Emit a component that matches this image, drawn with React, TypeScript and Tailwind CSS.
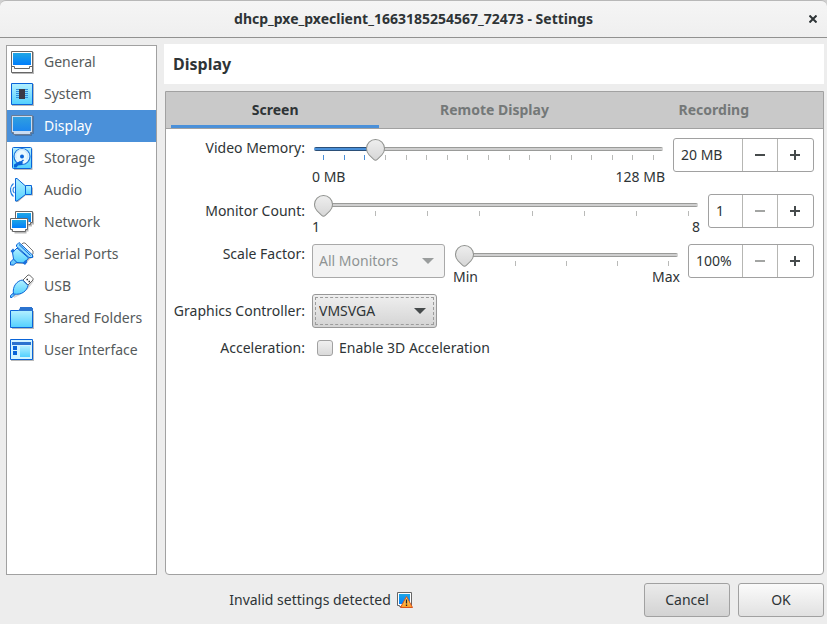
import { useState } from "react";
import type { CSSProperties, ReactNode } from "react";

const FONT = "font-['Noto_Sans',sans-serif]";

/* ---------- category icons, 24 x 24 ---------- */

function Gradients() {
  return (
    <svg width="0" height="0" className="absolute" aria-hidden="true">
      <defs>
        <linearGradient id="screen" x1="0" y1="0" x2="0" y2="1">
          <stop offset="0" stopColor="#1fa6e4" />
          <stop offset="1" stopColor="#007efc" />
        </linearGradient>
        <linearGradient id="screen-selected" x1="0" y1="0" x2="0" y2="1">
          <stop offset="0" stopColor="#2f9fe0" />
          <stop offset="1" stopColor="#1c86ee" />
        </linearGradient>
        <linearGradient id="pale" x1="0" y1="0" x2="0" y2="1">
          <stop offset="0" stopColor="#b4f0ff" />
          <stop offset="1" stopColor="#52d0ff" />
        </linearGradient>
        <linearGradient id="warn" x1="0" y1="0" x2="0" y2="1">
          <stop offset="0" stopColor="#ffe07a" />
          <stop offset="1" stopColor="#ff9a1f" />
        </linearGradient>
      </defs>
    </svg>
  );
}

function Icon({ children }: { children: ReactNode }) {
  return (
    <svg width="24" height="24" viewBox="0 0 24 24" className="shrink-0" aria-hidden="true">
      {children}
    </svg>
  );
}

const GeneralIcon = () => (
  <Icon>
    <path d="M2 2h22v22H2z" fill="#b9b9b9" />
    <path d="M1.5 1.5h21v21h-21z" fill="#fff" stroke="#666" />
    <path d="M3 3h18v12H3z" fill="url(#screen)" />
    <path d="M1.5 16.5h3v2h15v-2h3" fill="none" stroke="#666" />
  </Icon>
);

const SystemIcon = () => (
  <Icon>
    <path d="M2 2h22v22H2z" fill="#b9b9b9" />
    <path d="M1.5 1.5h21v21h-21z" fill="url(#pale)" stroke="#0a64d8" />
    <path d="M6 7.5h12M6 9.5h12M6 11.5h12M6 13.5h12M6 15.5h12" stroke="#2f8ee0" />
    <path d="M9 7h6v10H9z" fill="#3a3a46" />
  </Icon>
);

const DisplayIcon = () => (
  <Icon>
    <path d="M2 2h22v18h-2v2H5v-2H2z" fill="#4577ad" />
    <path d="M1.5 1.5h21v17h-2v2h-17v-2h-2z" fill="#c9dcf2" stroke="#6b7c94" />
    <path d="M3 3h18v14H3z" fill="url(#screen-selected)" />
  </Icon>
);

const StorageIcon = () => (
  <Icon>
    <path d="M4 2.5h18.5v21.5H4z" fill="#b9b9b9" />
    <rect x="2.5" y="1.5" width="19" height="21" rx="1" fill="url(#pale)" stroke="#0a64d8" />
    <circle cx="12" cy="10.5" r="8" fill="#e9f9ff" stroke="#1d74dc" strokeWidth="1.2" />
    <path d="M6.5 12.5a6 6 0 1 1 10 1" fill="none" stroke="#cfeafb" strokeWidth="1.5" />
    <circle cx="12" cy="10.5" r="2" fill="#0a64d8" />
    <path d="M4 21.5v-3l6-3.5 3 1.5-1 2.5-4 .5-1.5 2z" fill="#0a64d8" />
    <path d="M11 16l2.5-2" stroke="#0a64d8" strokeWidth="1.5" />
  </Icon>
);

const AudioIcon = () => (
  <Icon>
    <path d="M7 2l8 7.5h8v8h-7.5l-7.5 6.5H6z" fill="#b9b9b9" />
    <path d="M5.5 .5h1.5l8.5 7.5v8.5l-8.5 6.500H5.500z" fill="url(#pale)" stroke="#0a64d8" />
    <path d="M15.5 7.5h6v9h-6z" fill="url(#pale)" stroke="#0a64d8" />
    <path d="M4.5 9c-2 1-2 5 0 6M3.5 5.5c-4 3-4 10 0 13" fill="none" stroke="#2580e0" strokeWidth="1.2" />
  </Icon>
);

const NetworkIcon = () => (
  <Icon>
    <path d="M7 2.5h17v12h-2v2H9z" fill="#b9b9b9" />
    <path d="M5.5 1.5h17v11h-2v2h-13v-2h-2z" fill="#fff" stroke="#666" />
    <path d="M7 3h14v9H7z" fill="url(#screen)" />
    <path d="M1.5 9.5h17v12h-2v2h-12v-2h-3z" fill="#b9b9b9" />
    <path d="M.5 8.5h17v11h-2v2h-13v-2h-2z" fill="#fff" stroke="#666" />
    <path d="M2 10h14v8H2z" fill="url(#screen)" />
  </Icon>
);

const SerialIcon = () => (
  <Icon>
    <path d="M12 3l10 8 2 4-4 2-5 5H5l-3 2z" fill="#b9b9b9" />
    <path d="M11.5 2.5l1.5-1.5h2l8 8v3l-2 1.5z" fill="#fff" stroke="#777" />
    <path d="M3.5 17l-3 3v3h3l3.5-3z" fill="#6cc8fa" stroke="#0a64d8" />
    <path d="M7 6l-4.5 4.5 1 6.5 3.5 3.5 7.5.5 4-5z" fill="url(#pale)" stroke="#0a64d8" strokeLinejoin="round" />
    <path d="M6.5 3l2.5-2.5L22.5 13v2.5h-3.5L6.5 4.5z" fill="#8fdcff" stroke="#0a64d8" strokeLinejoin="round" />
    <path d="M9 2.5l11.5 11" stroke="#0a64d8" />
    <path d="M.5 9l2.5-2.5 2 2-2.5 3zM12.5 21l3-3 2 2-2.5 3z" fill="#1a6fdc" />
  </Icon>
);

const UsbIcon = () => (
  <Icon>
    <path d="M5 12l6-5 7-5 6 5-6 8-8 6-6 3z" fill="#c4c4c4" opacity=".7" />
    <path d="M13 6l5-5h1.5l3.5 3.5V6l-5 5z" fill="#fff" stroke="#666" />
    <path d="M16.5 5.5h1.5M18.5 7.5h1.5" stroke="#333" strokeWidth="1.5" />
    <path d="M3.5 20c-1.5-8 4-13.5 9-14l5.5 5.5c-1 5-6 10-14.5 8.5z" fill="url(#pale)" stroke="#0a64d8" />
    <path d="M.5 21.5l2.5-2 1.5 1.5-2.5 2.5H.5z" fill="#6cc8fa" stroke="#0a64d8" />
  </Icon>
);

const FolderIcon = () => (
  <Icon>
    <path d="M2 5h22v18H2z" fill="#b9b9b9" />
    <path d="M8 5l2-3v-1h12v1h1v4H8z" fill="#2b73cf" />
    <path d="M.5 4.5h22v17H.5z" fill="url(#pale)" stroke="#0a64d8" />
    <path d="M8 4h15v1H8z" fill="#2b73cf" />
  </Icon>
);

const InterfaceIcon = () => (
  <Icon>
    <path d="M1 3h23v20H1z" fill="#b9b9b9" />
    <path d="M.5 1.5h22v20H.5z" fill="#d3f4ff" stroke="#0a64d8" />
    <path d="M2 4h19v3H2z" fill="#2b73cf" />
    <path d="M3 8h4v4H3zM3 13h4v4H3z" fill="#0a64d8" />
    <path d="M10 8h10v11H10z" fill="url(#pale)" />
  </Icon>
);

const WarningIcon = () => (
  <svg width="16" height="16" viewBox="0 0 16 16" className="shrink-0" role="img" aria-label="Warning">
    <path d="M.5 .5h14v13h-2v1h-10v-1h-2z" fill="#fff" stroke="#666" />
    <path d="M2 2h11v10H2z" fill="url(#screen)" />
    <path d="M9.5 4.5l6 11H3.5z" fill="url(#warn)" stroke="#d9531e" strokeLinejoin="round" />
    <path d="M9.5 7.5v4M9.5 12.5v1.5" stroke="#222" strokeWidth="1.3" />
  </svg>
);

/* ---------- controls ---------- */

type SliderProps = {
  id: string;
  min: number;
  max: number;
  value: number;
  onChange: (value: number) => void;
  ticks: number;
  lowLabel: string;
  highLabel: string;
  filled?: boolean;
  roomy?: boolean;
  label?: string;
};

function Slider({ id, min, max, value, onChange, ticks, lowLabel, highLabel, filled, roomy, label }: SliderProps) {
  const part = (value - min) / (max - min);
  const fill = {
    "--fill": filled ? `${part * 100}%` : "0%",
  } as CSSProperties;
  return (
    <div className="flex min-w-0 flex-1 flex-col">
      <input
        id={id}
        type="range"
        aria-label={label}
        min={min}
        max={max}
        value={value}
        onChange={(e) => onChange(Number(e.target.value))}
        style={fill}
        className="relative z-10 mx-[2px] block h-[22px] appearance-none bg-transparent outline-none [&::-webkit-slider-runnable-track]:h-[4px] [&::-webkit-slider-runnable-track]:rounded-[2px] [&::-webkit-slider-runnable-track]:bg-[linear-gradient(to_right,#2b4f78_var(--fill),#9a9b99_var(--fill)),linear-gradient(to_right,#2b4f78_var(--fill),#9a9b99_var(--fill)),linear-gradient(to_right,#4a90d9_var(--fill),#cfcfcf_var(--fill))] [&::-webkit-slider-runnable-track]:bg-[length:100%_1px,100%_1px,100%_100%] [&::-webkit-slider-runnable-track]:bg-[position:top,bottom,center] [&::-webkit-slider-runnable-track]:bg-no-repeat [&::-webkit-slider-thumb]:-mt-2 [&::-webkit-slider-thumb]:size-[19px] [&::-webkit-slider-thumb]:rotate-45 [&::-webkit-slider-thumb]:appearance-none [&::-webkit-slider-thumb]:rounded-[50%_50%_3px_50%] [&::-webkit-slider-thumb]:border [&::-webkit-slider-thumb]:border-[#8f918e] [&::-webkit-slider-thumb]:bg-[linear-gradient(135deg,#f2f2f2,#d6d6d6)]"
      />
      <div className="-mt-[5px] flex h-[5px] justify-between px-[11px]" aria-hidden="true">
        {Array.from({ length: ticks }, (_, i) => (
          <span key={i} className={`w-px ${filled && i / (ticks - 1) <= part ? "bg-[#4a90d9]" : "bg-[#b9bab8]"}`} />
        ))}
      </div>
      <div className={`flex h-5 justify-between leading-[22px] ${roomy ? "mt-[6px]" : ""}`}>
        <span>{lowLabel}</span>
        <span>{highLabel}</span>
      </div>
    </div>
  );
}

type SpinProps = {
  label: string;
  value: number;
  suffix?: string;
  min: number;
  max: number;
  width: string;
  onChange: (value: number) => void;
};

function Spin({ label, value, suffix = "", min, max, width, onChange }: SpinProps) {
  const button =
    "flex items-center justify-center border-l border-[#b6b6b3] text-[#464b4c] disabled:text-[#a3a5a3]";
  return (
    <div className={`flex h-[34px] shrink-0 overflow-hidden rounded-[3px] border border-[#a1a1a1] bg-white ${width}`}>
      <input
        type="text"
        aria-label={label}
        value={`${value}${suffix}`}
        onChange={(e) => {
          const n = parseInt(e.target.value, 10);
          if (n >= min && n <= max) onChange(n);
        }}
        className="w-0 min-w-0 flex-1 pl-[7px] outline-none"
      />
      <button type="button" aria-label={`Decrease ${label}`} disabled={value <= min} onClick={() => onChange(value - 1)} className={`w-[35px] ${button}`}>
        <svg width="10" height="10" viewBox="0 0 10 10" stroke="currentColor" strokeWidth="2">
          <path d="M0 5h10" />
        </svg>
      </button>
      <button type="button" aria-label={`Increase ${label}`} disabled={value >= max} onClick={() => onChange(value + 1)} className={`w-9 pr-px ${button}`}>
        <svg width="10" height="10" viewBox="0 0 10 10" stroke="currentColor" strokeWidth="2">
          <path d="M0 5h10M5 0v10" />
        </svg>
      </button>
    </div>
  );
}

function Arrow({ className }: { className: string }) {
  return (
    <svg
      width="12"
      height="6"
      viewBox="0 0 12 6"
      className={`pointer-events-none absolute right-[11px] top-[14px] ${className}`}
      fill="currentColor"
      aria-hidden="true"
    >
      <path d="M0 0h12L6 6z" />
    </svg>
  );
}

/* ---------- window ---------- */

const CATEGORIES = [
  { name: "General", Glyph: GeneralIcon },
  { name: "System", Glyph: SystemIcon },
  { name: "Display", Glyph: DisplayIcon },
  { name: "Storage", Glyph: StorageIcon },
  { name: "Audio", Glyph: AudioIcon },
  { name: "Network", Glyph: NetworkIcon },
  { name: "Serial Ports", Glyph: SerialIcon },
  { name: "USB", Glyph: UsbIcon },
  { name: "Shared Folders", Glyph: FolderIcon },
  { name: "User Interface", Glyph: InterfaceIcon },
];

const TABS = ["Screen", "Remote Display", "Recording"];

export default function App() {
  const [memory, setMemory] = useState(20);
  const [monitors, setMonitors] = useState(1);
  const [scale, setScale] = useState(100);

  return (
    <div className={`flex h-screen flex-col bg-[#ededed] text-[14px] leading-5 text-[#2e3436] ${FONT}`}>
      <Gradients />
      <div className="bg-[#d0d0d0]">
        <header className="relative flex h-[38px] items-center justify-center rounded-t-[6px] border-b border-t border-b-[#919190] border-t-[#b8b8b8] bg-linear-to-b from-[#f5f5f5] to-[#efefef] font-bold">
          <h1>dhcp_pxe_pxeclient_1663185254567_72473 - Settings</h1>
          <button type="button" aria-label="Close" className="absolute right-[9px] top-[13px] p-px">
            <svg width="8" height="8" viewBox="0 0 8 8" stroke="#2e3436" strokeWidth="2">
              <path d="M.5 .5l7 7M7.5 .5l-7 7" />
            </svg>
          </button>
        </header>
      </div>

      <div className="flex min-h-0 flex-1 gap-[7px] pl-[6px] pr-[3px] pt-[6px]">
        <nav className="mt-px w-[151px] shrink-0 border border-[#a1a1a1] bg-white">
          <ul>
            {CATEGORIES.map(({ name, Glyph }) => (
              <li key={name}>
                <button
                  type="button"
                  className={`flex h-8 w-full items-center gap-[10px] pl-[3px] text-left ${
                    name === "Display" ? "bg-[#4a90d9] text-white" : "text-[#555a5b]"
                  }`}
                >
                  <Glyph />
                  {name}
                </button>
              </li>
            ))}
          </ul>
        </nav>

        <main className="flex min-w-0 flex-1 flex-col">
          <h2 className="flex h-[40px] items-center bg-white pl-[9px] text-[16px] font-bold">Display</h2>
          <section className="ml-px mt-[7px] flex-1 rounded-b-[4px] border border-[#a1a1a1] bg-white">
            <div role="tablist" className="flex h-[37px] gap-[11px] border-b border-[#a1a1a1] bg-[#c9c9c9] px-[5px]">
              {TABS.map((tab, i) => (
                <button
                  key={tab}
                  type="button"
                  role="tab"
                  aria-selected={i === 0}
                  className={`flex-1 border-b-[3px] pt-[2px] font-bold ${
                    i === 0 ? "border-[#4a90d9]" : "border-transparent text-[#747878]"
                  }`}
                >
                  {tab}
                </button>
              ))}
            </div>

            <form className="grid grid-cols-[134px_1fr] gap-x-[7px] gap-y-2 whitespace-nowrap pb-2 pl-[5px] pr-[9px] pt-[9px]">
              <label htmlFor="memory" className="text-right">Video Memory:</label>
              <div className="flex items-start gap-2">
                <Slider id="memory" min={0} max={128} value={memory} onChange={setMemory} ticks={17} lowLabel="0 MB" highLabel="128 MB" filled roomy />
                <Spin label="Video Memory" value={memory} suffix=" MB" min={0} max={128} width="w-[141px]" onChange={setMemory} />
              </div>

              <label htmlFor="monitors" className="text-right leading-[34px]">Monitor Count:</label>
              <div className="flex items-start gap-2">
                <Slider id="monitors" min={1} max={8} value={monitors} onChange={setMonitors} ticks={8} lowLabel="1" highLabel="8" />
                <Spin label="Monitor Count" value={monitors} min={1} max={8} width="w-[106px]" onChange={setMonitors} />
              </div>

              <label htmlFor="scale-monitor" className="text-right">Scale Factor:</label>
              <div className="flex items-start gap-2">
                <div className="relative w-[133px] shrink-0">
                  <select
                    id="scale-monitor"
                    disabled
                    className="h-[34px] w-full appearance-none rounded-[3px] border border-[#a9a9a9] bg-[#f3f3f3] pl-[6px] text-[#8f9393] opacity-100"
                  >
                    <option>All Monitors</option>
                  </select>
                  <Arrow className="text-[#9a9d9d]" />
                </div>
                <Slider id="scale" label="Scale Factor" min={100} max={200} value={scale} onChange={setScale} ticks={5} lowLabel="Min" highLabel="Max" />
                <Spin label="Scale Factor" value={scale} suffix="%" min={100} max={200} width="w-[126px]" onChange={setScale} />
              </div>

              <label htmlFor="controller" className="text-right leading-[34px]">Graphics Controller:</label>
              <div className="relative w-[125px]">
                <select
                  id="controller"
                  className="h-[34px] w-full appearance-none rounded-[3px] border border-[#989898] bg-linear-to-b from-[#efefef] to-[#d4d4d4] pl-[6px] outline-1 -outline-offset-4 outline-dashed outline-[#9c9c9c]"
                >
                  <option>VMSVGA</option>
                  <option>VBoxVGA</option>
                  <option>VBoxSVGA</option>
                </select>
                <Arrow className="text-[#464b4c]" />
              </div>

              <span className="text-right leading-6">Acceleration:</span>
              <label className="flex items-center gap-[6px] pl-[5px]">
                <input
                  type="checkbox"
                  className="size-4 appearance-none rounded-[3px] border border-[#a1a1a1] bg-linear-to-b from-[#f0f0f0] to-[#dadada] checked:from-[#4a90d9] checked:to-[#4a90d9]"
                />
                Enable 3D Acceleration
              </label>
            </form>
          </section>
        </main>
      </div>

      <footer className="flex items-center gap-2 pb-[7px] pl-[6px] pr-[3px] pt-2">
        <p className="flex flex-1 items-center justify-center gap-[6px]">
          Invalid settings detected
          <WarningIcon />
        </p>
        <button type="button" className="h-[34px] w-[86px] rounded-[3px] border border-[#a1a1a1] bg-linear-to-b from-[#ebebeb] to-[#d3d3d3]">
          Cancel
        </button>
        <button type="button" className="h-[34px] w-[86px] rounded-[3px] border border-[#a1a1a1] bg-linear-to-b from-[#fbfbfb] to-[#e1e1e1]">
          OK
        </button>
      </footer>
    </div>
  );
}
